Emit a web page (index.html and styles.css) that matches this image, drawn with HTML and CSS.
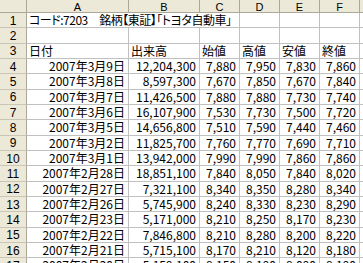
FILE: index.html
```html
<!DOCTYPE html>
<html lang="ja">
<head>
<meta charset="utf-8">
<title>トヨタ自動車 株価</title>
<link rel="stylesheet" href="styles.css">
</head>
<body>
<div class="sheet">
  <div class="hd corner"></div>
  <div class="hd col">A</div><div class="hd col">B</div><div class="hd col">C</div><div class="hd col">D</div><div class="hd col">E</div><div class="hd col">F</div><div class="hd col"></div>

  <div class="hd row">1</div>
  <div class="c span3 title">コード:7203　銘柄【東証】「トヨタ自動車」</div><div class="c"></div><div class="c"></div><div class="c"></div><div class="c"></div>

  <div class="hd row">2</div>
  <div class="c"></div><div class="c"></div><div class="c"></div><div class="c"></div><div class="c"></div><div class="c"></div><div class="c"></div>

  <div class="hd row">3</div>
  <div class="c">日付</div><div class="c">出来高</div><div class="c">始値</div><div class="c">高値</div><div class="c">安値</div><div class="c">終値</div><div class="c"></div>

  <div class="hd row">4</div>
  <div class="c n">2007年3月9日</div><div class="c n">12,204,300</div><div class="c n">7,880</div><div class="c n">7,950</div><div class="c n">7,830</div><div class="c n">7,860</div><div class="c"></div>

  <div class="hd row">5</div>
  <div class="c n">2007年3月8日</div><div class="c n">8,597,300</div><div class="c n">7,670</div><div class="c n">7,850</div><div class="c n">7,670</div><div class="c n">7,840</div><div class="c"></div>

  <div class="hd row">6</div>
  <div class="c n">2007年3月7日</div><div class="c n">11,426,500</div><div class="c n">7,880</div><div class="c n">7,880</div><div class="c n">7,730</div><div class="c n">7,740</div><div class="c"></div>

  <div class="hd row">7</div>
  <div class="c n">2007年3月6日</div><div class="c n">16,107,900</div><div class="c n">7,530</div><div class="c n">7,730</div><div class="c n">7,500</div><div class="c n">7,720</div><div class="c"></div>

  <div class="hd row">8</div>
  <div class="c n">2007年3月5日</div><div class="c n">14,656,800</div><div class="c n">7,510</div><div class="c n">7,590</div><div class="c n">7,440</div><div class="c n">7,460</div><div class="c"></div>

  <div class="hd row">9</div>
  <div class="c n">2007年3月2日</div><div class="c n">11,825,700</div><div class="c n">7,760</div><div class="c n">7,770</div><div class="c n">7,690</div><div class="c n">7,710</div><div class="c"></div>

  <div class="hd row">10</div>
  <div class="c n">2007年3月1日</div><div class="c n">13,942,000</div><div class="c n">7,990</div><div class="c n">7,990</div><div class="c n">7,860</div><div class="c n">7,860</div><div class="c"></div>

  <div class="hd row">11</div>
  <div class="c n">2007年2月28日</div><div class="c n">18,851,100</div><div class="c n">7,840</div><div class="c n">8,050</div><div class="c n">7,840</div><div class="c n">8,020</div><div class="c"></div>

  <div class="hd row">12</div>
  <div class="c n">2007年2月27日</div><div class="c n">7,321,100</div><div class="c n">8,340</div><div class="c n">8,350</div><div class="c n">8,280</div><div class="c n">8,340</div><div class="c"></div>

  <div class="hd row">13</div>
  <div class="c n">2007年2月26日</div><div class="c n">5,745,900</div><div class="c n">8,240</div><div class="c n">8,330</div><div class="c n">8,230</div><div class="c n">8,290</div><div class="c"></div>

  <div class="hd row">14</div>
  <div class="c n">2007年2月23日</div><div class="c n">5,171,000</div><div class="c n">8,210</div><div class="c n">8,250</div><div class="c n">8,170</div><div class="c n">8,230</div><div class="c"></div>

  <div class="hd row">15</div>
  <div class="c n">2007年2月22日</div><div class="c n">7,846,800</div><div class="c n">8,210</div><div class="c n">8,280</div><div class="c n">8,200</div><div class="c n">8,220</div><div class="c"></div>

  <div class="hd row">16</div>
  <div class="c n">2007年2月21日</div><div class="c n">5,715,100</div><div class="c n">8,170</div><div class="c n">8,210</div><div class="c n">8,120</div><div class="c n">8,180</div><div class="c"></div>

  <div class="hd row">17</div>
  <div class="c n">2007年2月20日</div><div class="c n">5,159,100</div><div class="c n">8,150</div><div class="c n">8,190</div><div class="c n">8,090</div><div class="c n">8,190</div><div class="c"></div>
</div>
</body>
</html>
```
FILE: styles.css
```css
html, body {
  margin: 0;
  padding: 0;
  background: #ffffff;
  overflow: hidden;
}

.sheet {
  display: grid;
  grid-template-columns: 27px 102px 71px 40px 40px 40px 40px 40px;
  grid-template-rows: 13px repeat(17, 15.33px);
  width: 400px;
  font-family: "Noto Sans CJK JP", "Liberation Sans", sans-serif;
  font-size: 12px;
  color: #000000;
}

.hd {
  box-sizing: border-box;
  background: #ece9d8;
  border-right: 1px solid #aca899;
  border-bottom: 1px solid #aca899;
  display: flex;
  align-items: center;
  justify-content: center;
  font-family: "Liberation Sans", sans-serif;
  font-size: 11px;
  line-height: 12px;
  white-space: nowrap;
}

.hd.col {
  padding-top: 1px;
}

.hd.row {
  border-bottom: 1px solid #c9c6b8;
  padding-top: 1px;
  font-size: 12px;
}

.c {
  box-sizing: border-box;
  border-right: 1px solid #c0c0c0;
  border-bottom: 1px solid #c0c0c0;
  display: flex;
  align-items: center;
  padding: 0 2px;
  line-height: 14px;
  white-space: nowrap;
  font-feature-settings: "palt";
}

.c.n {
  justify-content: flex-end;
  padding-right: 3px;
}

.span3 {
  grid-column: span 3;
}

.title {
  letter-spacing: -0.5px;
}
```
